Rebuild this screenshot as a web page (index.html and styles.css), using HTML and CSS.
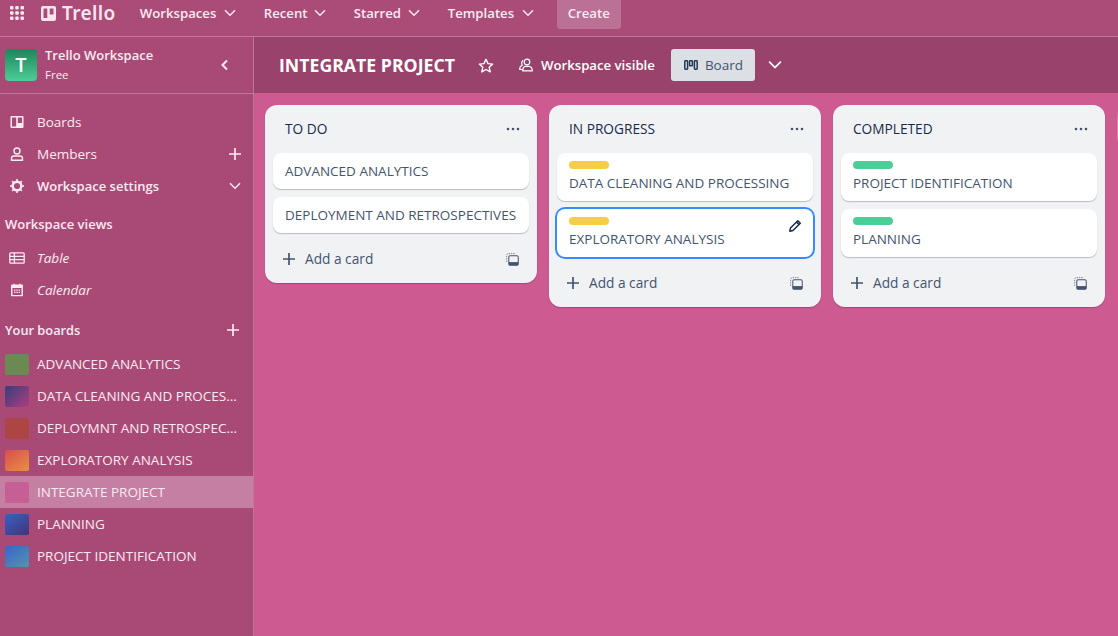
FILE: index.html
```html
<!DOCTYPE html>
<html lang="en">
<head>
    <meta charset="UTF-8">
    <meta name="viewport" content="width=device-width, initial-scale=1.0">
    <title>INTEGRATE PROJECT | Trello</title>
    <link rel="stylesheet" href="styles.css">
</head>
<body>
    <svg class="icon-defs" aria-hidden="true">
        <symbol id="chevron-down" viewBox="0 0 12 12"><path d="M1 3.2 6 8.2 11 3.2" fill="none" stroke="currentColor" stroke-width="1.5"/></symbol>
        <symbol id="plus" viewBox="0 0 12 12"><path d="M6 0V12M0 6H12" fill="none" stroke="currentColor" stroke-width="1.7"/></symbol>
        <symbol id="dots" viewBox="0 0 14 4"><circle cx="2" cy="2" r="1.3" fill="currentColor"/><circle cx="7" cy="2" r="1.3" fill="currentColor"/><circle cx="12" cy="2" r="1.3" fill="currentColor"/></symbol>
        <symbol id="template" viewBox="0 0 14 14"><path d="M.7 9.500V2.500Q.7 .7 2.500 .7H9.500" fill="none" stroke="currentColor" stroke-width="1" stroke-dasharray="1.400 1.100" opacity=".8"/><rect x="3" y="3" width="10.200" height="10.200" rx="1.500" fill="none" stroke="currentColor" stroke-width="1.100"/><rect x="3" y="9.800" width="10.200" height="3.400" fill="currentColor"/></symbol>
    </svg>

    <header class="topbar">
        <svg class="waffle" width="14" height="14" viewBox="0 0 14 14" fill="currentColor">
            <rect width="3.500" height="3.500" rx="1"/><rect x="5.250" width="3.500" height="3.500" rx="1"/><rect x="10.500" width="3.500" height="3.500" rx="1"/>
            <rect y="5.250" width="3.500" height="3.500" rx="1"/><rect x="5.250" y="5.250" width="3.500" height="3.500" rx="1"/><rect x="10.500" y="5.250" width="3.500" height="3.500" rx="1"/>
            <rect y="10.500" width="3.500" height="3.500" rx="1"/><rect x="5.250" y="10.500" width="3.500" height="3.500" rx="1"/><rect x="10.500" y="10.500" width="3.500" height="3.500" rx="1"/>
        </svg>
        <div class="logo">
            <svg width="15" height="15" viewBox="0 0 15 15"><path fill="currentColor" fill-rule="evenodd" d="M2 0H13Q15 0 15 2V13Q15 15 13 15H2Q0 15 0 13V2Q0 0 2 0ZM2.500 2.500V12H6.300V2.500ZM8.700 2.500V8.500H12.500V2.500Z"/></svg>
            <span>Trello</span>
        </div>
        <nav class="topnav">
            <a class="topnav-item">Workspaces <svg class="chev"><use href="#chevron-down"/></svg></a>
            <a class="topnav-item">Recent <svg class="chev"><use href="#chevron-down"/></svg></a>
            <a class="topnav-item">Starred <svg class="chev"><use href="#chevron-down"/></svg></a>
            <a class="topnav-item">Templates <svg class="chev"><use href="#chevron-down"/></svg></a>
            <a class="create-btn">Create</a>
        </nav>
    </header>

    <div class="main">
        <aside class="sidebar">
            <div class="ws-head">
                <div class="ws-avatar">T</div>
                <div class="ws-info">
                    <div class="ws-name">Trello Workspace</div>
                    <div class="ws-plan">Free</div>
                </div>
                <svg class="ws-collapse" width="8" height="12" viewBox="0 0 8 12"><path d="M6 1.500 1.500 6 6 10.500" fill="none" stroke="currentColor" stroke-width="2"/></svg>
            </div>

            <ul class="side-menu">
                <li class="side-item">
                    <svg class="side-icon" width="14" height="14" viewBox="0 0 14 14"><path fill="currentColor" fill-rule="evenodd" d="M1.500 1H12.500Q13.500 1 13.500 2V12Q13.500 13 12.500 13H1.500Q.5 13 .5 12V2Q.5 1 1.500 1ZM2 2.500V11.500H6.200V2.500ZM7.800 2.500V8H12V2.500Z"/></svg>
                    Boards
                </li>
                <li class="side-item">
                    <svg class="side-icon" width="14" height="14" viewBox="0 0 14 14" fill="none" stroke="currentColor" stroke-width="1.400"><circle cx="7" cy="4" r="3"/><path d="M1.500 13.300V11.500Q1.500 9 4 9H10Q12.500 9 12.500 11.500V13.300Z"/></svg>
                    Members
                    <svg class="side-action"><use href="#plus"/></svg>
                </li>
                <li class="side-item side-item-bold">
                    <svg class="side-icon" width="14" height="14" viewBox="0 0 14 14"><circle cx="7" cy="7" r="4.300" fill="none" stroke="currentColor" stroke-width="2.400"/><path d="M7 0V14M0 7H14M2.100 2.100 11.900 11.900M11.900 2.100 2.100 11.900" stroke="currentColor" stroke-width="1.500" stroke-dasharray="2.200 9.600 2.200 0"/></svg>
                    Workspace settings
                    <svg class="side-action side-chev"><use href="#chevron-down"/></svg>
                </li>
            </ul>

            <h2 class="side-title side-title-views">Workspace views</h2>
            <ul class="side-menu">
                <li class="side-item side-item-em">
                    <svg class="side-icon" width="16" height="12" viewBox="0 0 16 12" fill="none" stroke="currentColor" stroke-width="1.300"><rect x=".8" y=".8" width="14.400" height="10.400" rx="1"/><path d="M.8 4.300H15.200M.8 7.700H15.200M5.400 .8V11.200"/></svg>
                    Table
                </li>
                <li class="side-item side-item-em">
                    <svg class="side-icon" width="12" height="13" viewBox="0 0 12 13"><path fill="currentColor" fill-rule="evenodd" d="M2.500 0H3.700V1H8.300V0H9.500V1H11Q12 1 12 2V12Q12 13 11 13H1Q0 13 0 12V2Q0 1 1 1H2.500ZM1.500 4.500V11.500H10.500V4.500ZM3 6H4.500V7.200H3ZM5.300 6H6.800V7.200H5.300ZM7.600 6H9V7.200H7.600ZM3 8.300H4.500V9.500H3ZM5.300 8.300H6.800V9.500H5.300ZM7.600 8.300H9V9.500H7.600Z"/></svg>
                    Calendar
                </li>
            </ul>

            <div class="boards-head">
                <h2 class="side-title">Your boards</h2>
                <svg class="boards-add"><use href="#plus"/></svg>
            </div>
            <ul class="board-links">
                <li class="board-link"><span class="thumb thumb-green"></span><span class="board-name">ADVANCED ANALYTICS</span></li>
                <li class="board-link"><span class="thumb thumb-purple"></span><span class="board-name">DATA CLEANING AND PROCES...</span></li>
                <li class="board-link"><span class="thumb thumb-red"></span><span class="board-name">DEPLOYMNT AND RETROSPEC...</span></li>
                <li class="board-link"><span class="thumb thumb-orange"></span><span class="board-name">EXPLORATORY ANALYSIS</span></li>
                <li class="board-link active"><span class="thumb thumb-pink"></span><span class="board-name">INTEGRATE PROJECT</span></li>
                <li class="board-link"><span class="thumb thumb-navy"></span><span class="board-name">PLANNING</span></li>
                <li class="board-link"><span class="thumb thumb-blue"></span><span class="board-name">PROJECT IDENTIFICATION</span></li>
            </ul>
        </aside>

        <section class="board">
            <div class="board-bar">
                <h1 class="board-title">INTEGRATE PROJECT</h1>
                <svg class="star" width="16" height="15" viewBox="0 0 16 15"><path d="M8 1.300 10 5.600 14.700 6.100 11.200 9.300 12.200 13.900 8 11.500 3.800 13.900 4.800 9.300 1.300 6.100 6 5.600Z" fill="none" stroke="currentColor" stroke-width="1.400" stroke-linejoin="round"/></svg>
                <div class="visibility">
                    <svg width="14" height="14" viewBox="0 0 14 14" fill="none" stroke="currentColor" stroke-width="1.200"><circle cx="8" cy="4" r="2.800"/><path d="M3.800 12.800H13.200Q13.400 8.800 10 8.300H6.500Q3.600 8.800 3.800 12.800Z"/><path d="M4.200 2.300Q1.800 4 3.200 7.200Q.6 8.300 .7 11.500H3.500"/></svg>
                    Workspace visible
                </div>
                <div class="view-btn">
                    <svg width="14" height="12" viewBox="0 0 14 12" fill="none" stroke="currentColor" stroke-width="1.500"><rect x=".8" y="1.800" width="2.800" height="8.400" rx=".6"/><rect x="5.600" y="1.800" width="2.800" height="5" rx=".6"/><rect x="10.400" y="1.800" width="2.800" height="8.400" rx=".6"/></svg>
                    Board
                </div>
                <svg class="view-chev"><use href="#chevron-down"/></svg>
            </div>

            <div class="lists">
                <div class="list">
                    <div class="list-head">
                        <h3 class="list-title">TO DO</h3>
                        <svg class="list-menu"><use href="#dots"/></svg>
                    </div>
                    <div class="cards">
                        <div class="card">ADVANCED ANALYTICS</div>
                        <div class="card">DEPLOYMENT AND RETROSPECTIVES</div>
                    </div>
                    <div class="list-foot">
                        <svg class="foot-plus"><use href="#plus"/></svg>
                        <span class="foot-text">Add a card</span>
                        <svg class="foot-template"><use href="#template"/></svg>
                    </div>
                </div>

                <div class="list">
                    <div class="list-head">
                        <h3 class="list-title">IN PROGRESS</h3>
                        <svg class="list-menu"><use href="#dots"/></svg>
                    </div>
                    <div class="cards">
                        <div class="card card-labeled"><span class="label label-yellow"></span>DATA CLEANING AND PROCESSING</div>
                        <div class="card card-labeled card-focus">
                            <span class="label label-yellow"></span>EXPLORATORY ANALYSIS
                            <svg class="card-edit" width="14" height="14" viewBox="0 0 14 14"><path d="M9.800 1.700 12.300 4.200 5 11.500 1.800 12.200 2.500 9Z" fill="none" stroke="#172b4d" stroke-width="1.500" stroke-linejoin="round"/><path d="M8.500 3 11 5.500" stroke="#172b4d" stroke-width="1.500"/></svg>
                        </div>
                    </div>
                    <div class="list-foot">
                        <svg class="foot-plus"><use href="#plus"/></svg>
                        <span class="foot-text">Add a card</span>
                        <svg class="foot-template"><use href="#template"/></svg>
                    </div>
                </div>

                <div class="list">
                    <div class="list-head">
                        <h3 class="list-title">COMPLETED</h3>
                        <svg class="list-menu"><use href="#dots"/></svg>
                    </div>
                    <div class="cards">
                        <div class="card card-labeled"><span class="label label-green"></span>PROJECT IDENTIFICATION</div>
                        <div class="card card-labeled"><span class="label label-green"></span>PLANNING</div>
                    </div>
                    <div class="list-foot">
                        <svg class="foot-plus"><use href="#plus"/></svg>
                        <span class="foot-text">Add a card</span>
                        <svg class="foot-template"><use href="#template"/></svg>
                    </div>
                </div>

                <div class="add-list"></div>
            </div>
        </section>
    </div>
</body>
</html>
```

FILE: styles.css
```css
* {
    box-sizing: border-box;
}

body {
    display: flex;
    flex-direction: column;
    height: 100vh;
    margin: 0;
    overflow: hidden;
    background-color: #cd5a91;
    color: #fbeaf2;
    font-family: "Open Sans", "Noto Sans", sans-serif;
    font-size: 13.5px;
}

h1, h2, h3, ul {
    margin: 0;
    padding: 0;
    list-style: none;
}

.icon-defs {
    display: none;
}

/* top bar */
.topbar {
    display: flex;
    align-items: flex-start;
    flex: none;
    height: 37px;
    padding-left: 10px;
    background-color: #ab4c78;
    border-bottom: 1px solid #c1779b;
}

.waffle {
    margin-top: 6px;
}

.logo {
    display: flex;
    align-items: center;
    gap: 6px;
    height: 26px;
    margin-left: 17px;
    color: #f7e6ee;
}

.logo span {
    font-family: "Noto Sans", sans-serif;
    font-size: 19px;
    font-weight: 600;
    letter-spacing: 0.4px;
}

.topnav {
    display: flex;
    margin-left: 24px;
}

.topnav-item {
    display: flex;
    align-items: center;
    justify-content: space-between;
    height: 26px;
    margin-right: 28px;
    font-weight: 600;
    font-size: 13.2px;
}

.topnav-item:nth-child(1) { width: 96px; }
.topnav-item:nth-child(2) { width: 62px; }
.topnav-item:nth-child(3) { width: 66px; }
.topnav-item:nth-child(4) { width: 86px; margin-right: 23px; }

.chev {
    width: 12px;
    height: 12px;
    flex: none;
}

.create-btn {
    display: flex;
    align-items: center;
    justify-content: center;
    width: 64px;
    height: 29px;
    padding-bottom: 3px;
    border-radius: 0 0 3px 3px;
    background-color: #bb7096;
    font-weight: 600;
    font-size: 13.2px;
}

.main {
    display: flex;
    flex: 1;
    min-height: 0;
}

/* sidebar */
.sidebar {
    flex: none;
    width: 254px;
    background-color: #a94a76;
    border-right: 1px solid #c1779b;
}

.ws-head {
    display: flex;
    align-items: center;
    height: 57px;
    padding: 0 24px 1px 5px;
    border-bottom: 1px solid #c1779b;
}

.ws-avatar {
    display: flex;
    align-items: center;
    justify-content: center;
    flex: none;
    width: 32px;
    height: 32px;
    border-radius: 4px;
    background: linear-gradient(#1f845a, #4bce97);
    color: #fff;
    font-size: 20px;
    font-weight: 600;
}

.ws-info {
    flex: 1;
    margin-left: 8px;
}

.ws-name {
    font-weight: 600;
    font-size: 13px;
    line-height: 20px;
}

.ws-plan {
    font-size: 11.5px;
    line-height: 20px;
}

.side-menu {
    padding-top: 12px;
}

.side-item {
    position: relative;
    display: flex;
    align-items: center;
    height: 32px;
    padding-left: 37px;
}

.side-icon {
    position: absolute;
    left: 17px;
    top: 50%;
    transform: translate(-50%, -50%);
}

.side-item-bold {
    font-weight: 600;
    font-size: 13px;
}

.side-item-em {
    font-style: italic;
}

.side-action {
    position: absolute;
    right: 12px;
    width: 12px;
    height: 12px;
}

.side-title {
    font-size: 13px;
    font-weight: 600;
    line-height: 20px;
}

.side-title-views {
    padding: 12px 0 0 5px;
}

.side-title-views + .side-menu {
    padding-top: 8px;
}

.boards-head {
    display: flex;
    align-items: center;
    justify-content: space-between;
    height: 32px;
    margin-top: 8px;
    padding: 0 14px 0 5px;
}

.boards-head .side-title {
    font-size: 12.8px;
}

.boards-add {
    width: 12px;
    height: 12px;
}

.board-links {
    margin-top: 2px;
}

.board-link {
    display: flex;
    align-items: center;
    height: 32px;
    padding: 0 5px;
}

.board-link.active {
    background-color: #c47fa3;
}

.thumb {
    flex: none;
    width: 24px;
    height: 21px;
    margin-right: 8px;
    border-radius: 2px;
}

.thumb-green { background-color: #6b8a52; }
.thumb-purple { background: linear-gradient(135deg, #34407c, #b03c80); }
.thumb-red { background-color: #ad4545; }
.thumb-orange { background: linear-gradient(145deg, #da4d4d, #e79044); }
.thumb-pink { background-color: #c65f95; }
.thumb-navy { background: linear-gradient(145deg, #3a60c4, #403477); }
.thumb-blue { background: linear-gradient(145deg, #3c62cc, #4f97ae); }

.board-name {
    white-space: nowrap;
}

/* board */
.board {
    flex: 1;
    min-width: 0;
    overflow: hidden;
}

.board-bar {
    display: flex;
    align-items: center;
    height: 56px;
    padding-left: 25px;
    background-color: #99426b;
    color: #fff;
}

.board-title {
    font-size: 17.7px;
    font-weight: 700;
    white-space: nowrap;
}

.star {
    margin-left: 23px;
}

.visibility {
    display: flex;
    align-items: center;
    gap: 8px;
    margin-left: 25px;
    font-weight: 600;
    font-size: 13.2px;
    white-space: nowrap;
}

.view-btn {
    display: flex;
    align-items: center;
    gap: 7px;
    width: 84px;
    height: 32px;
    margin-left: 16px;
    padding-left: 13px;
    border-radius: 3px;
    background-color: #dcdfe4;
    color: #44546f;
    font-weight: 500;
}

.view-btn svg {
    color: #253858;
}

.view-chev {
    width: 14px;
    height: 14px;
    margin-left: 13px;
}

.lists {
    display: flex;
    align-items: flex-start;
    gap: 12px;
    padding: 12px 0 0 11px;
}

.list {
    flex: none;
    width: 272px;
    border-radius: 12px;
    background-color: #f1f2f4;
    box-shadow: 0 1px 1px #091e4240;
    color: #172b4d;
}

.list-head {
    display: flex;
    align-items: center;
    justify-content: space-between;
    height: 48px;
    padding: 0 17px 0 20px;
}

.list-title {
    padding-bottom: 1px;
    font-size: 13.7px;
    font-weight: 500;
}

.list-menu {
    width: 14px;
    height: 4px;
    color: #44546f;
}

.cards {
    display: flex;
    flex-direction: column;
    gap: 8px;
    padding: 0 8px;
}

.card {
    position: relative;
    min-height: 36px;
    padding: 8px 12px;
    border-radius: 8px;
    background-color: #fff;
    box-shadow: 0 1px 1px #091e4240;
    color: #44546f;
    line-height: 20px;
    white-space: nowrap;
}

.card-labeled {
    height: 48px;
}

.card-focus {
    box-shadow: 0 0 0 2px #388bff;
}

.label {
    display: block;
    width: 40px;
    height: 8px;
    margin-bottom: 4px;
    border-radius: 4px;
}

.label-yellow { background-color: #f5cd47; }
.label-green { background-color: #4bce97; }

.card-edit {
    position: absolute;
    top: 10px;
    right: 11px;
}

.list-foot {
    display: flex;
    align-items: center;
    height: 36px;
    margin: 8px 0 6px;
    padding: 0 18px;
    color: #44546f;
}

.foot-plus {
    width: 12px;
    height: 12px;
}

.foot-text {
    flex: 1;
    margin-left: 10px;
    padding-bottom: 1px;
    font-weight: 500;
    font-size: 13.7px;
}

.foot-template {
    width: 13px;
    height: 13px;
}

.add-list {
    flex: none;
    width: 272px;
    height: 44px;
    border-radius: 12px;
    background-color: #ffffff3d;
}
```
